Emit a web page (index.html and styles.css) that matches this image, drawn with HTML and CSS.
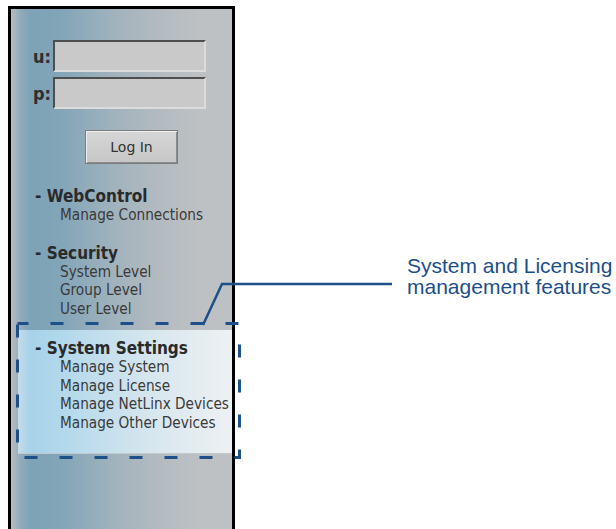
FILE: index.html
```html
<!DOCTYPE html>
<html lang="en">
<head>
    <meta charset="UTF-8">
    <title>Web Control - System Settings</title>
    <link rel="stylesheet" href="styles.css">
</head>
<body>
    <div class="pagina">
        <!-- Pannello di navigazione -->
        <div class="pannello">
            <form class="login">
                <div class="campo">
                    <label for="utente">u:</label>
                    <input type="text" id="utente">
                </div>
                <div class="campo">
                    <label for="password">p:</label>
                    <input type="password" id="password">
                </div>
                <button type="button" class="accedi">Log In</button>
            </form>
            <ul class="menu">
                <li class="gruppo">
                    <span class="titolo">- WebControl</span>
                    <ul>
                        <li>Manage Connections</li>
                    </ul>
                </li>
                <li class="gruppo">
                    <span class="titolo">- Security</span>
                    <ul>
                        <li>System Level</li>
                        <li>Group Level</li>
                        <li>User Level</li>
                    </ul>
                </li>
                <li class="gruppo evidenziato">
                    <span class="titolo">- System Settings</span>
                    <ul>
                        <li>Manage System</li>
                        <li>Manage License</li>
                        <li>Manage NetLinx Devices</li>
                        <li>Manage Other Devices</li>
                    </ul>
                </li>
            </ul>
        </div>
        <!-- Didascalia -->
        <p class="didascalia">System and Licensing<br>management features</p>
    </div>
    <!-- Riquadro tratteggiato e linea di richiamo -->
    <svg class="richiamo" width="616" height="529" viewBox="0 0 616 529">
        <rect x="17.5" y="323.5" width="222" height="134" fill="none" stroke="#1d4f89" stroke-width="3" stroke-dasharray="13 22" stroke-dashoffset="2"/>
        <polyline points="203,325 222,284 392,284" fill="none" stroke="#1d4f89" stroke-width="2.5"/>
    </svg>
</body>
</html>
```

FILE: styles.css
```css
/* Stile globale */
html, body {
    height: 529px;
    overflow: hidden;
}
body {
    margin: 0;
    padding: 6px 0 0 8px;
    background-color: #fff;
    font-family: "DejaVu Sans Condensed", "DejaVu Sans", sans-serif;
    color: #333;
    position: relative;
}
ul {
    list-style: none;
    margin: 0;
    padding: 0;
}
.pagina {
    display: flex;
    align-items: flex-start;
}
.pannello {
    width: 221px;
    height: 530px;
    border: 3px solid #000;
    border-bottom: none;
    background: linear-gradient(to right, #b8bcbf 0, #8fabbb 10px, #7ea2b6 20px, #82a5b8 50px, #9fb2bd 100px, #b4bbc0 150px, #bdc1c3 190px, #bdc1c3 100%);
}
.login {
    padding: 31px 0 0 22px;
}
.campo {
    display: flex;
    align-items: center;
    margin-bottom: 5px;
}
.campo label {
    width: 20px;
    font-size: 18px;
    font-weight: bold;
    color: #2e2e2e;
}
.campo input {
    box-sizing: border-box;
    width: 153px;
    height: 32px;
    margin: 0;
    border: 2px solid;
    border-color: #4e4e4e #dcdcdc #dcdcdc #4e4e4e;
    background-color: #c9c9c9;
}
.accedi {
    display: block;
    box-sizing: border-box;
    width: 93px;
    height: 34px;
    margin: 21px 0 0 52px;
    border: 1px solid #7c7c7c;
    box-shadow: inset 1px 1px #efefef, inset -1px -1px #8c8c8c;
    background: linear-gradient(#d6d6d6, #c6c6c6);
    font-family: "DejaVu Sans", sans-serif;
    font-size: 14px;
    color: #333;
}
.menu {
    margin-top: 23px;
}
.gruppo {
    margin-bottom: 19px;
    padding-left: 24px;
}
.titolo {
    display: block;
    font-size: 17px;
    line-height: 19px;
    font-weight: bold;
    color: #2a2a2a;
    white-space: nowrap;
}
.gruppo ul {
    padding-left: 25px;
}
.gruppo ul li {
    font-size: 15.2px;
    line-height: 18.7px;
    color: #3a3a3a;
    white-space: nowrap;
}
.evidenziato {
    margin: -8px 0 0 7px;
    padding: 9px 0 20px 17px;
    background: linear-gradient(to right, #c6dce7 0, #a6d2ea 12px, #b9dbec 60px, #d6e6ee 130px, #eef1f3 100%);
    border-bottom: 1px solid #c3c9cc;
}
/* Didascalia */
.didascalia {
    margin: 249px 0 0 172px;
    font-family: "Liberation Sans", Arial, sans-serif;
    font-size: 21px;
    line-height: 21px;
    color: #1d4f89;
    white-space: nowrap;
}
.richiamo {
    position: absolute;
    left: 0;
    top: 0;
}
```
